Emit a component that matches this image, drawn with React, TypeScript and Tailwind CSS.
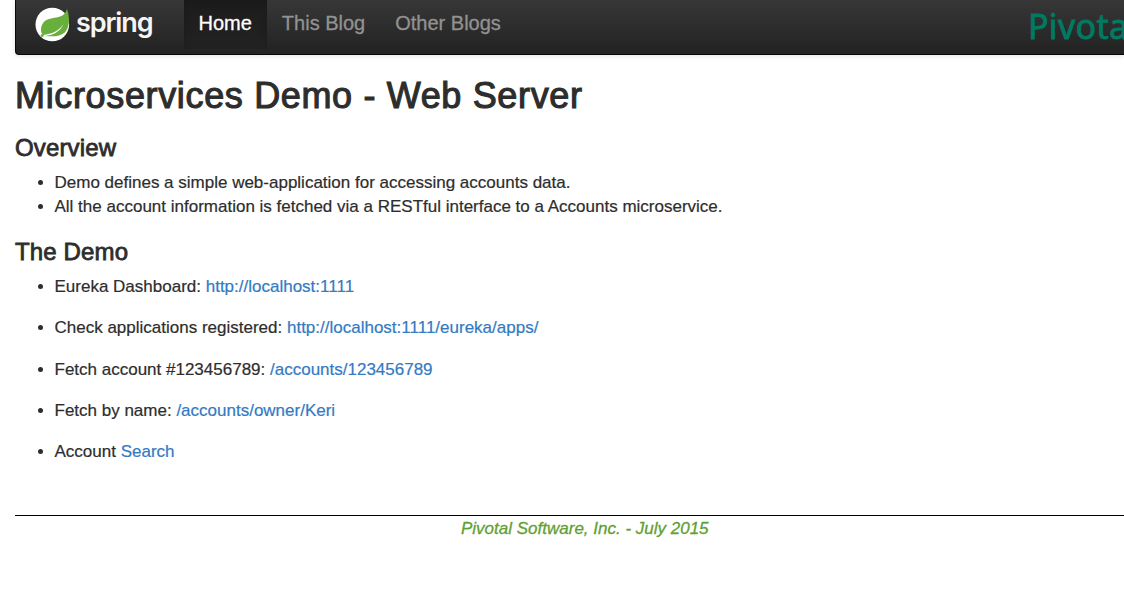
import type { ReactNode } from "react";

function SpringLogo() {
  return (
    <a href="#" className="flex h-full w-[149px] shrink-0 items-start pl-[19px] pt-[7px]">
      <svg className="h-[35px] w-[35px] shrink-0" viewBox="0 0 35 35">
        <circle cx="17.300" cy="17.500" r="16.800" fill="#fff" />
        <path
          d="M32 2C30.500 6.500 28 9 23.500 10C18 11.300 12 11.300 8.500 15.500C5 20 5.500 25.500 8 28C17 27 24 24 28.500 17C25 25 18 28.200 10 29C18 29.700 25.500 29.500 29.800 25.500C35.500 19 34.500 9 32 2Z"
          fill="#68b03b"
        />
        <circle cx="7.200" cy="28.500" r="1.500" fill="#68b03b" />
      </svg>
      <span className="ml-[6px] mt-[-2.5px] font-['Inter',sans-serif] text-[27px] font-semibold leading-[36px] tracking-[-1.1px] text-[#f5f5f5]">
        spring
      </span>
    </a>
  );
}

function NavItem({ children, active = false }: { children: ReactNode; active?: boolean }) {
  return (
    <a
      href="#"
      className={
        active
          ? "h-[49px] bg-[linear-gradient(#1c1c1c,#222)] pl-[14.5px] pr-[15.5px] pt-[11px] text-[20px] leading-[24px] text-white shadow-[inset_0_3px_9px_rgba(0,0,0,0.1)] [-webkit-text-stroke:0.3px_#fff]"
          : "h-[49px] pl-[14.5px] pr-[15.5px] pt-[11px] text-[20px] leading-[24px] text-[#929292] [-webkit-text-stroke:0.3px_#929292]"
      }
    >
      {children}
    </a>
  );
}

function Link({ children }: { children: ReactNode }) {
  return <a href="#" className="text-[#337ac3]">{children}</a>;
}

export default function App() {
  return (
    <div className="h-[602px] overflow-hidden bg-white pl-[15px] font-['Liberation_Sans',Arial,sans-serif] text-[17px] leading-[24px] text-[#2d2d2d]">
      <nav className="flex h-[55px] overflow-hidden rounded-bl-[4px] border-b border-l border-[#080808] bg-[linear-gradient(#373737,#222)] shadow-[0_1px_5px_rgba(0,0,0,0.12)]">
        <SpringLogo />
        <div className="ml-[19px] flex">
          <NavItem active>Home</NavItem>
          <NavItem>This Blog</NavItem>
          <NavItem>Other Blogs</NavItem>
        </div>
        <div className="ml-auto w-[96px] shrink-0 overflow-hidden whitespace-nowrap pt-[6px] font-['Noto_Sans',sans-serif] text-[34px] leading-[40px] tracking-[0.3px] text-[#007a62] [-webkit-text-stroke:0.8px_#007a62]">
          Pivota
        </div>
      </nav>

      <h1 className="mt-[21px] whitespace-nowrap text-[36px] leading-[40px] tracking-[0.65px] [-webkit-text-stroke:1.1px_#2d2d2d]">
        Microservices Demo - Web Server
      </h1>

      <h2 className="mt-[18px] text-[24px] leading-[28px] tracking-[0.15px] [-webkit-text-stroke:0.8px_#2d2d2d]">Overview</h2>
      <ul className="-ml-[0.5px] mt-[9px] list-disc pl-[40px] [-webkit-text-stroke:0.2px]">
        <li>Demo defines a simple web-application for accessing accounts data.</li>
        <li>All the account information is fetched via a RESTful interface to a Accounts microservice.</li>
      </ul>

      <h2 className="mt-[19px] text-[24px] leading-[28px] tracking-[0.15px] [-webkit-text-stroke:0.8px_#2d2d2d]">The Demo</h2>
      <ul className="-ml-[0.5px] mt-[9px] flex list-disc flex-col gap-[17.3px] pl-[40px] [-webkit-text-stroke:0.2px]">
        <li>Eureka Dashboard: <Link>http://localhost:1111</Link></li>
        <li>Check applications registered: <Link>http://localhost:1111/eureka/apps/</Link></li>
        <li>Fetch account #123456789: <Link>/accounts/123456789</Link></li>
        <li>Fetch by name: <Link>/accounts/owner/Keri</Link></li>
        <li>Account <Link>Search</Link></li>
      </ul>

      <footer className="mt-[51px] border-t border-black pl-[446px] pt-px text-[17px] italic text-[#5fa134] [-webkit-text-stroke:0.3px]">
        Pivotal Software, Inc. - July 2015
      </footer>
    </div>
  );
}
